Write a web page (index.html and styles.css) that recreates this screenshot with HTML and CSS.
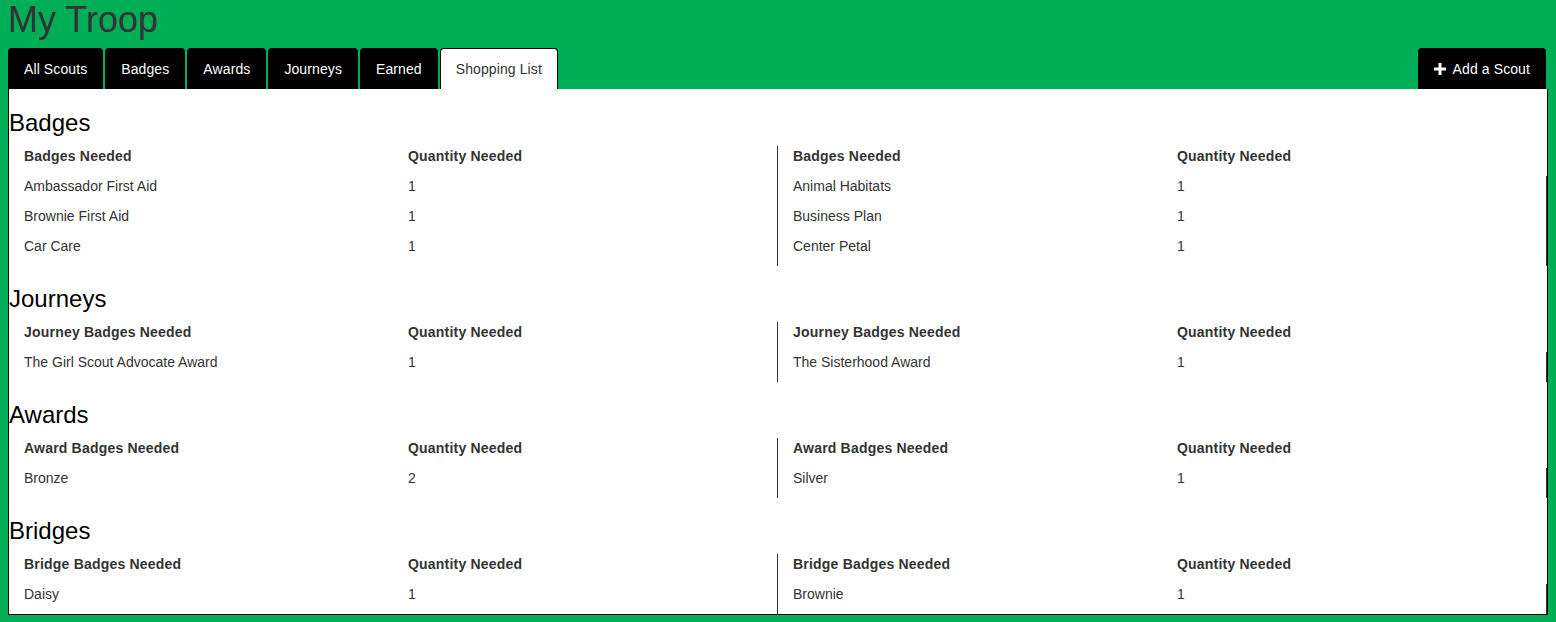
FILE: index.html
```html
<!DOCTYPE html>
<html>
<head>
<meta charset="utf-8">
<title>My Troop</title>
<link rel="stylesheet" href="styles.css">
</head>
<body>
<h1 class="page-title">My Troop</h1>
<nav class="tabs">
  <a class="tab">All Scouts</a>
  <a class="tab">Badges</a>
  <a class="tab">Awards</a>
  <a class="tab">Journeys</a>
  <a class="tab">Earned</a>
  <a class="tab tab-active">Shopping List</a>
  <a class="tab tab-right"><svg class="plus" width="12" height="12" viewBox="0 0 12 12"><path d="M4.5 0h3v4.5H12v3H7.5V12h-3V7.5H0v-3h4.5z" fill="#fff"/></svg> Add a Scout</a>
</nav>
<main class="panel">
  <section class="section">
    <h3 class="section-title">Badges</h3>
    <div class="cols">
      <div class="col col-left">
        <table class="list">
          <thead><tr><th class="name">Badges Needed</th><th>Quantity Needed</th></tr></thead>
          <tbody>
            <tr><td class="name">Ambassador First Aid</td><td>1</td></tr>
            <tr><td class="name">Brownie First Aid</td><td>1</td></tr>
            <tr><td class="name">Car Care</td><td>1</td></tr>
          </tbody>
        </table>
      </div>
      <div class="col col-right">
        <table class="list">
          <thead><tr><th class="name">Badges Needed</th><th>Quantity Needed</th></tr></thead>
          <tbody>
            <tr><td class="name">Animal Habitats</td><td>1</td></tr>
            <tr><td class="name">Business Plan</td><td>1</td></tr>
            <tr><td class="name">Center Petal</td><td>1</td></tr>
          </tbody>
        </table>
      </div>
    </div>
  </section>
  <section class="section">
    <h3 class="section-title">Journeys</h3>
    <div class="cols">
      <div class="col col-left">
        <table class="list">
          <thead><tr><th class="name">Journey Badges Needed</th><th>Quantity Needed</th></tr></thead>
          <tbody>
            <tr><td class="name">The Girl Scout Advocate Award</td><td>1</td></tr>
          </tbody>
        </table>
      </div>
      <div class="col col-right">
        <table class="list">
          <thead><tr><th class="name">Journey Badges Needed</th><th>Quantity Needed</th></tr></thead>
          <tbody>
            <tr><td class="name">The Sisterhood Award</td><td>1</td></tr>
          </tbody>
        </table>
      </div>
    </div>
  </section>
  <section class="section">
    <h3 class="section-title">Awards</h3>
    <div class="cols">
      <div class="col col-left">
        <table class="list">
          <thead><tr><th class="name">Award Badges Needed</th><th>Quantity Needed</th></tr></thead>
          <tbody>
            <tr><td class="name">Bronze</td><td>2</td></tr>
          </tbody>
        </table>
      </div>
      <div class="col col-right">
        <table class="list">
          <thead><tr><th class="name">Award Badges Needed</th><th>Quantity Needed</th></tr></thead>
          <tbody>
            <tr><td class="name">Silver</td><td>1</td></tr>
          </tbody>
        </table>
      </div>
    </div>
  </section>
  <section class="section">
    <h3 class="section-title">Bridges</h3>
    <div class="cols">
      <div class="col col-left">
        <table class="list">
          <thead><tr><th class="name">Bridge Badges Needed</th><th>Quantity Needed</th></tr></thead>
          <tbody>
            <tr><td class="name">Daisy</td><td>1</td></tr>
          </tbody>
        </table>
      </div>
      <div class="col col-right">
        <table class="list">
          <thead><tr><th class="name">Bridge Badges Needed</th><th>Quantity Needed</th></tr></thead>
          <tbody>
            <tr><td class="name">Brownie</td><td>1</td></tr>
          </tbody>
        </table>
      </div>
    </div>
  </section>
</main>
</body>
</html>
```
FILE: styles.css
```css
html {
  background: #00ae58;
  overflow: hidden;
}
body {
  margin: 0 8px 7px;
  font-family: "Liberation Sans", Arial, sans-serif;
  font-size: 14px;
  color: #333;
}
.page-title {
  margin: 0;
  font-size: 36px;
  line-height: 40px;
  font-weight: normal;
  color: #333;
}
.tabs {
  display: flex;
  margin-top: 8px;
}
.tab {
  display: block;
  margin-right: 2px;
  padding: 10px 15px;
  line-height: 20px;
  border: 1px solid #000;
  border-bottom: 0;
  border-radius: 4px 4px 0 0;
  background: #000;
  color: #fff;
  white-space: nowrap;
  letter-spacing: 0.1px;
}
.tab-active {
  background: #fff;
  color: #333;
}
.tab-right {
  margin-left: auto;
}
.plus {
  vertical-align: -1px;
  margin-right: 3px;
}
.panel {
  display: block;
  background: #fff;
  border: 1px solid #000;
  border-top: 0;
  padding-top: 1px;
}
.section-title {
  margin: 20px 0 10px;
  font-size: 24px;
  line-height: 26px;
  font-weight: normal;
  color: #000;
}
.cols {
  display: grid;
  grid-template-columns: 1fr 1fr;
}
.col {
  box-sizing: border-box;
  padding: 0 15px;
}
.col-left {
  border-right: 1px solid #333;
}
.col-right {
  padding-right: 0;
}
.list {
  width: 100%;
  border-collapse: collapse;
}
.list th,
.list td {
  padding: 0 0 10px;
  line-height: 20px;
  text-align: left;
  vertical-align: top;
}
.list th {
  font-weight: bold;
  color: #333;
  letter-spacing: 0.2px;
}
.list .name {
  width: 384px;
}
.col-right tbody td:last-child {
  border-right: 1px solid #333;
}
```
